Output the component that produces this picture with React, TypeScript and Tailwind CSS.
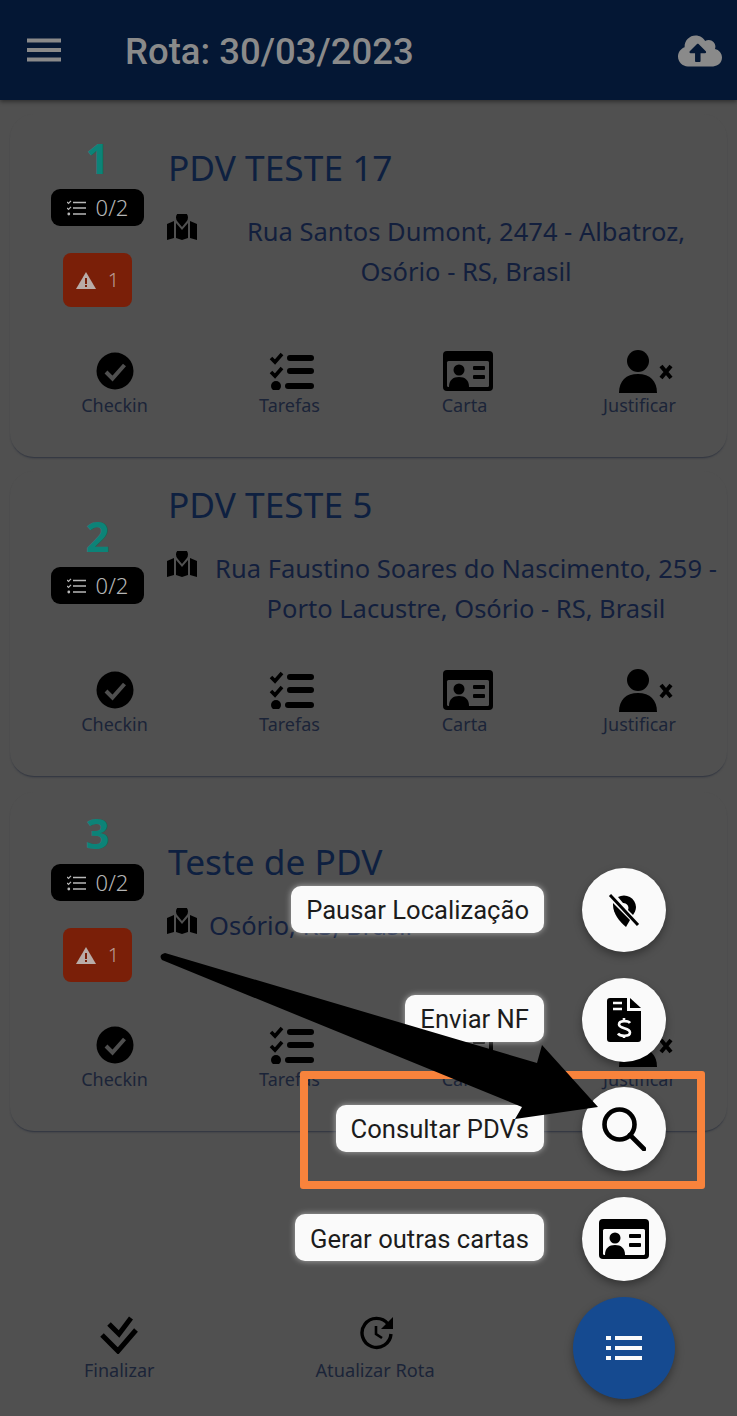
import { FaCloudUploadAlt } from 'react-icons/fa';

const body = "font-['Noto_Sans',sans-serif]";
const roboto = "font-['Roboto',sans-serif]";

function CheckinIcon() {
  return (
    <svg viewBox="0 0 38 38" className="h-[38px] w-[38px]">
      <circle cx="19" cy="19" r="18.5" fill="#000" />
      <path d="M10 20l6.5 6.5L28.5 13" fill="none" stroke="#4f4f4f" strokeWidth="4" />
    </svg>
  );
}

function TasksIcon() {
  return (
    <svg viewBox="0 0 46 38" className="h-[38px] w-[46px] translate-x-[2px]">
      <path d="M2 6l4 4 7-8M2 20l4 4 7-8" fill="none" stroke="#000" strokeWidth="3.6" />
      <circle cx="7" cy="34" r="5" fill="#000" />
      <rect x="18" y="3" width="27" height="6" rx="3" fill="#000" />
      <rect x="18" y="16" width="27" height="6" rx="3" fill="#000" />
      <rect x="16" y="31" width="29" height="6" rx="3" fill="#000" />
    </svg>
  );
}

function CardIcon({ fg = '#4f4f4f', className = '' }: { fg?: string; className?: string }) {
  return (
    <svg viewBox="0 0 50 40" className={`h-[40px] w-[50px] ${className}`}>
      <rect width="50" height="40" rx="4" fill="#000" />
      <rect x="4" y="10" width="42" height="26" rx="1.5" fill={fg} />
      <circle cx="16" cy="19" r="5.5" fill="#000" />
      <path d="M6 36c0-7 4-10 10-10s10 3 10 10z" fill="#000" />
      <rect x="30" y="15" width="12" height="4" rx="1" fill="#000" />
      <rect x="30" y="24" width="12" height="4" rx="1" fill="#000" />
    </svg>
  );
}

function UserXIcon() {
  return (
    <svg viewBox="0 0 56 44" className="h-[44px] w-[56px] translate-x-[6px]">
      <circle cx="20" cy="12" r="11" fill="#000" />
      <path d="M1 44c0-12 7-19 19-19s19 7 19 19z" fill="#000" />
      <path d="M43 17l10 12M53 17L43 29" stroke="#000" strokeWidth="4" />
    </svg>
  );
}

function MapIcon() {
  return (
    <svg viewBox="0 0 30 26" className="h-[26px] w-[30px] -translate-x-[1px]">
      <path d="M0 10l7-3v17l-7 2z" fill="#000" />
      <path d="M23 7l7 3v16l-7-2z" fill="#000" />
      <path d="M9 9l6 7 6-7v15l-6 2-6-2z" fill="#000" />
      <path d="M15 13L10.500 7.500A6 6 0 1 1 19.500 7.500z" fill="#000" />
    </svg>
  );
}

function ChecklistSmall() {
  return (
    <svg viewBox="0 0 19 16" className="h-4 w-[19px]">
      <path d="M0 2l1.5 1.5L4 .8M0 8l1.5 1.5L4 6.8" fill="none" stroke="#b8b8b8" strokeWidth="1.2" />
      <circle cx="1.8" cy="14" r="1.4" fill="#b8b8b8" />
      <path d="M6 2.500h13M6 8h13M6 14h13" stroke="#b8b8b8" strokeWidth="1.5" />
    </svg>
  );
}

function WarnIcon() {
  return (
    <svg viewBox="0 0 20 17" className="h-[17px] w-5">
      <path d="M10 0l10 17H0z" fill="#b9aca8" />
      <path d="M9 6h2v6H9zM9 13h2v2H9z" fill="#7a1f08" />
    </svg>
  );
}

function Action({ icon, label }: { icon: React.ReactNode; label: string }) {
  return (
    <div className="flex flex-col items-center">
      <div className="flex h-[44px] items-center justify-center">{icon}</div>
      <span className={`${body} text-[18px] leading-[24px] text-[#1b2438]`}>{label}</span>
    </div>
  );
}

interface PdvCardProps {
  num: string;
  title: string;
  address: string;
  warn?: boolean;
  cardClass: string;
  leftClass: string;
  actionsClass: string;
}

function PdvCard({ num, title, address, warn, cardClass, leftClass, actionsClass }: PdvCardProps) {
  return (
    <div className={`rounded-[24px] bg-[#505050] pl-[17px] shadow-[0_2px_2px_-1px_rgba(20,28,50,0.6)] ${cardClass}`}>
      <div className="flex items-start">
        <div className={`flex w-[141px] shrink-0 flex-col items-center ${leftClass}`}>
          <span className={`${body} text-[42px] font-bold leading-[48px] text-[#0c8378]`}>{num}</span>
          <div className="mt-[7px] flex h-[37px] w-[93px] items-center justify-center gap-[10px] rounded-[9px] bg-black">
            <ChecklistSmall />
            <span className={`${body} text-[22px] font-light text-[#b5b5b5]`}>0/2</span>
          </div>
          {warn && (
            <div className="mt-[27px] flex h-[54px] w-[69px] items-center justify-center gap-[12px] rounded-[8px] bg-[#7a1f08]">
              <WarnIcon />
              <span className={`${body} text-[20px] font-light text-[#b99a92]`}>1</span>
            </div>
          )}
        </div>
        <div className="min-w-0 flex-1">
          <h2 className={`${body} text-[35.3px] leading-[50px] text-[#0e2040]`}>{title}</h2>
          <div className="mt-[19px] flex items-start pr-[4px]">
            <div className="mt-[3px] shrink-0"><MapIcon /></div>
            <p className={`${body} pl-[11px] text-center text-[25.5px] leading-[40px] text-[#131f3d]`}>{address}</p>
          </div>
        </div>
      </div>
      <div className={`grid grid-cols-4 ${actionsClass}`}>
        <Action icon={<CheckinIcon />} label="Checkin" />
        <Action icon={<TasksIcon />} label="Tarefas" />
        <Action icon={<CardIcon className="translate-x-[3px]" />} label="Carta" />
        <Action icon={<UserXIcon />} label="Justificar" />
      </div>
    </div>
  );
}

function FabItem({ label, icon }: { label: string; icon: React.ReactNode }) {
  return (
    <div className="flex h-[84px] items-center justify-end gap-[38px]">
      <span className={`${roboto} mb-[2px] flex h-[47px] items-center rounded-[10px] bg-[#fafafa] px-[15px] pt-[2px] text-[25.6px] text-[#1c1c1c] shadow-[0_0_6px_rgba(255,255,255,0.55)]`}>{label}</span>
      <div className="flex h-[84px] w-[84px] items-center justify-center rounded-full bg-[#fafafa] shadow-[0_4px_8px_rgba(0,0,0,0.35)]">{icon}</div>
    </div>
  );
}

export default function App() {
  return (
    <div className="relative h-[1416px] w-[737px] overflow-hidden bg-[#505050]">
      <header className="flex h-[100px] items-center bg-[#041734] shadow-[0_2px_4px_rgba(0,0,0,0.4)]">
        <svg viewBox="0 0 34 24" className="ml-[27px] h-[24px] w-[34px]">
          <path d="M0 2.500h34M0 12h34M0 21.500h34" stroke="#8a8a8a" strokeWidth="4" />
        </svg>
        <h1 className={`${roboto} ml-[64px] flex-1 pt-[4px] text-[36.5px] font-medium text-[#8a8a8a]`}>Rota: 30/03/2023</h1>
        <FaCloudUploadAlt className="mr-[15px] mt-[2px] h-[38px] w-[44px] text-[#8a8a8a]" />
      </header>

      <main className="flex flex-col pl-[10px] pr-[10px]">
        <PdvCard
          num="1"
          title="PDV TESTE 17"
          address="Rua Santos Dumont, 2474 - Albatroz, Osório - RS, Brasil"
          warn
          cardClass="mt-[14px] h-[343px] pt-[28px]"
          leftClass="mt-[-8px]"
          actionsClass="mt-[42px]"
        />
        <PdvCard
          num="2"
          title="PDV TESTE 5"
          address="Rua Faustino Soares do Nascimento, 259 - Porto Lacustre, Osório - RS, Brasil"
          cardClass="mt-[14px] h-[305px] pt-[8px]"
          leftClass="mt-[33px]"
          actionsClass="mt-[40px]"
        />
        <PdvCard
          num="3"
          title="Teste de PDV"
          address="Osório, RS, Brasil"
          warn
          cardClass="mt-[16px] h-[339px] pt-[44px]"
          leftClass="mt-[-27px]"
          actionsClass="mt-[41px]"
        />
      </main>

      <footer className="absolute bottom-[34px] left-0 flex w-[500px] justify-start">
        <div className="ml-[84px] flex flex-col items-center">
          <svg viewBox="0 0 38 38" className="h-[38px] w-[38px]">
            <path d="M9 8l10 10L31 2M2 19l16 16L36 14" fill="none" stroke="#000" strokeWidth="5" />
          </svg>
          <span className={`${body} mt-[4px] text-[18px] leading-[24px] text-[#1b2438]`}>Finalizar</span>
        </div>
        <div className="ml-[161px] flex flex-col items-center">
          <svg viewBox="0 0 34 34" className="h-[34px] w-[34px] translate-x-[2px]">
            <path d="M28 8A14.500 14.500 0 1 0 31 18" fill="none" stroke="#000" strokeWidth="3.4" />
            <path d="M33 1v12H21z" fill="#000" />
            <path d="M16 10v8l6 4" fill="none" stroke="#000" strokeWidth="2.6" />
          </svg>
          <span className={`${body} mt-[8px] text-[18.2px] leading-[24px] text-[#1b2438]`}>Atualizar Rota</span>
        </div>
      </footer>

      <div className="absolute right-[71px] top-[868px] flex flex-col gap-[25.6px]">
        <FabItem
          label="Pausar Localização"
          icon={
            <svg viewBox="0 0 34 36" className="h-[36px] w-[34px]">
              <path d="M11 5A12 12 0 0 1 29 15C29 18 27.500 21 26 23L21 18A5 5 0 0 0 16 11Z" fill="#000" />
              <path d="M6 11L23 28L19 35C13 30 6 22 6 13Z" fill="#000" />
              <path d="M3 3l28 30" stroke="#000" strokeWidth="3" />
            </svg>
          }
        />
        <FabItem
          label="Enviar NF"
          icon={
            <svg viewBox="0 0 34 44" className="h-[44px] w-[34px]">
              <path d="M3 0h17v13h14v28a3 3 0 0 1-3 3H3a3 3 0 0 1-3-3V3a3 3 0 0 1 3-3z" fill="#000" />
              <path d="M23 0l11 10H23z" fill="#000" />
              <path d="M6 5h9M6 11h9" stroke="#fafafa" strokeWidth="2.4" />
              <path d="M23 25c-1.500-2.500-11-3-11 1.500 0 4.500 11 3 11 8 0 4.500-10 4-12 1M17 20v4M17 37v3" fill="none" stroke="#fafafa" strokeWidth="2.6" />
            </svg>
          }
        />
        <FabItem
          label="Consultar PDVs"
          icon={
            <svg viewBox="0 0 44 44" className="h-[44px] w-[44px]">
              <circle cx="17.500" cy="17.500" r="15" fill="none" stroke="#000" strokeWidth="4.6" />
              <path d="M28 28l14 14" stroke="#000" strokeWidth="4.6" strokeLinecap="round" />
            </svg>
          }
        />
        <FabItem label="Gerar outras cartas" icon={<CardIcon fg="#fafafa" />} />
      </div>

      <button className="absolute left-[573px] top-[1297px] flex h-[102px] w-[102px] items-center justify-center rounded-full bg-[#154a90] shadow-[0_4px_8px_rgba(0,0,0,0.35)]">
        <svg viewBox="0 0 36 26" className="h-[26px] w-[36px]">
          <path d="M0 3h5M9 3h27M0 13h5M9 13h27M0 23h5M9 23h27" stroke="#fafafa" strokeWidth="4" />
        </svg>
      </button>

      <div className="absolute left-[300px] top-[1071px] h-[118px] w-[405px] rounded-[3px] border-[8px] border-[#f8833c]" />

      <svg viewBox="0 0 737 1416" className="pointer-events-none absolute left-0 top-0 h-[1416px] w-[737px]">
        <path d="M165 953L537 1063L542 1045L598 1107L515 1119L522 1107L162 960Q158 955 165 953z" fill="#000" />
      </svg>
    </div>
  );
}
